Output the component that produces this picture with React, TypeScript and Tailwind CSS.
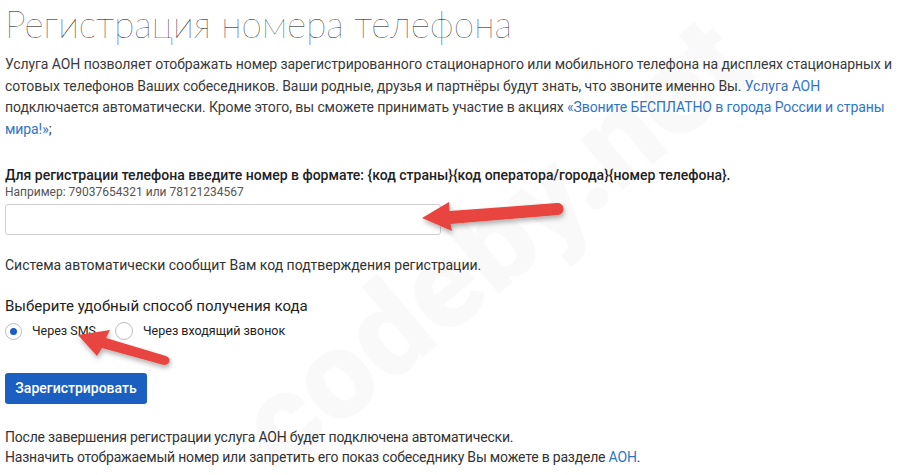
import React from 'react';

function Arrows() {
    return (
        <svg className="absolute inset-0 pointer-events-none" width="902" height="475" viewBox="0 0 902 475">
            <defs>
                <filter id="sh" x="-20%" y="-50%" width="140%" height="200%">
                    <feDropShadow dx="1" dy="3" stdDeviation="2.5" floodColor="#000" floodOpacity="0.3" />
                </filter>
            </defs>
            <g filter="url(#sh)" fill="#e8443f">
                {/* arrow to input */}
                <path d="M422 218 L449 202 L449.5 211 L557 203 Q563 203 563.5 208.5 Q564 214 558 215 L450.5 224 L452 231 Z" />
                {/* arrow to sms radio */}
                <path d="M78 335 L110 330 L106 338 L166 356 Q171 358 169 362.5 Q167 366 162 364.5 L102 348 L97 356 Z" />
            </g>
        </svg>
    );
}

export default function App() {
    return (
        <div className="relative w-[902px] h-[475px] overflow-hidden bg-white text-[#333] font-['Roboto',sans-serif]">
            <div className="px-[5px]">
                <h1 className="font-['Lato',sans-serif] font-thin text-[37px] leading-none text-[#000] pt-[5px] whitespace-nowrap">
                    Регистрация номера телефона
                </h1>
                <p className="mt-[12px] text-[14px] leading-[21.5px] text-[#3a3a3a] whitespace-nowrap tracking-[-0.08px]">
                    Услуга АОН позволяет отображать номер зарегистрированного стационарного или мобильного телефона на дисплеях стационарных и<br />
                    сотовых телефонов Ваших собеседников. Ваши родные, друзья и партнёры будут знать, что звоните именно Вы. <a className="text-[#2f74c8]">Услуга АОН</a><br />
                    подключается автоматически. Кроме этого, вы сможете принимать участие в акциях <a className="text-[#2f74c8]">«Звоните БЕСПЛАТНО в города России и страны<br />мира!»</a>;
                </p>

                <div className="mt-[26px] text-[14px] leading-[18px] font-medium text-[#222] whitespace-nowrap">
                    Для регистрации телефона введите номер в формате: {'{'}код страны{'}'}{'{'}код оператора/города{'}'}{'{'}номер телефона{'}'}.
                </div>
                <div className="text-[12px] leading-[16px] text-[#555]">Например: 79037654321 или 78121234567</div>
                <input
                    type="text"
                    className="mt-[4px] block w-[436px] h-[31px] border border-[#cfcfcf] rounded-[3px] px-2 text-[14px] outline-none"
                />

                <div className="mt-[21px] text-[14px] leading-[18px]">
                    Система автоматически сообщит Вам код подтверждения регистрации.
                </div>

                <div className="mt-[23px] text-[15px] leading-[18px] text-[#222]">Выберите удобный способ получения кода</div>
                <div className="mt-[7px] flex items-center text-[12.5px] text-[#222]">
                    <span className="w-[17px] h-[17px] rounded-full border border-[#bdbdbd] flex items-center justify-center">
                        <span className="w-[7px] h-[7px] rounded-full bg-[#1a5fc0]" />
                    </span>
                    <span className="ml-[10px]">Через SMS</span>
                    <span className="ml-[19px] w-[18px] h-[18px] rounded-full border border-[#bdbdbd]" />
                    <span className="ml-[10px]">Через входящий звонок</span>
                </div>

                <button className="mt-[32px] w-[142px] h-[31px] rounded-[3px] bg-[#1b5fc1] text-white text-[14px] font-medium">
                    Зарегистрировать
                </button>

                <div className="mt-[23px] text-[14px] leading-[20px] text-[#333] tracking-[-0.2px]">
                    После завершения регистрации услуга АОН будет подключена автоматически.<br />
                    Назначить отображаемый номер или запретить его показ собеседнику Вы можете в разделе <a className="text-[#2f74c8]">АОН</a>.
                </div>
            </div>

            <div className="absolute left-[185px] top-[180px] -rotate-[40deg] font-['Roboto',sans-serif] font-black text-[125px] leading-none text-[#000] opacity-[0.018] pointer-events-none select-none whitespace-nowrap">
                codeby.net
            </div>
            <Arrows />
        </div>
    );
}
